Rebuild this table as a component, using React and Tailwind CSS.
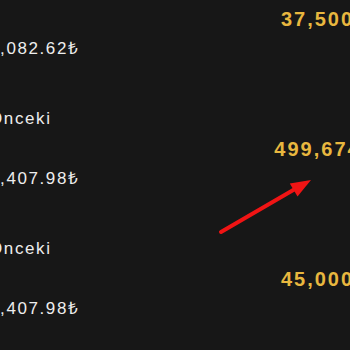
const rows = [
  { label: "Önceki", value: "1,082.62₺", amount: "37,500" },
  { label: "Önceki", value: "1,407.98₺", amount: "499,674" },
  { label: "Önceki", value: "1,407.98₺", amount: "45,000" },
];

const App = () => {
  return (
    <div className="relative w-[350px] h-[350px] overflow-hidden bg-[#171717] font-['Liberation_Sans',Arial,sans-serif]">
      <div className="-mt-[46px] flex flex-col">
        {rows.map((row, i) => (
          <div key={i} className="flex h-[130px] items-center">
            <div className="flex flex-1 flex-col gap-9 -ml-[11px] text-[17px] leading-6 tracking-[1.6px] text-[#eeeeee]">
              <span>{row.label}</span>
              <span>{row.value}</span>
            </div>
            <div className="w-[145px] shrink-0 -mr-[40px] text-center text-[20px] leading-7 font-bold tracking-[2px] text-[#e8b73f]">
              {row.amount}
            </div>
          </div>
        ))}
      </div>

      {/* annotation arrow */}
      <svg
        className="pointer-events-none absolute inset-0"
        width="350"
        height="350"
        viewBox="0 0 350 350"
      >
        <line
          x1="221"
          y1="232"
          x2="295"
          y2="189"
          stroke="#f01414"
          strokeWidth="4"
          strokeLinecap="round"
        />
        <polygon points="311,180 297.5,196.5 289.8,183.4" fill="#f01414" />
      </svg>
    </div>
  );
};

export default App;
